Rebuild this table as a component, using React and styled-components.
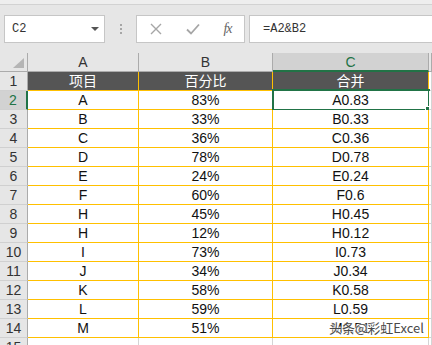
import React from "react"
import styled, { createGlobalStyle } from "styled-components"

const GlobalStyle = createGlobalStyle`
  html, body {
    margin: 0;
    padding: 0;
    background: #e6e6e6;
  }
  * {
    box-sizing: border-box;
  }
`

const Window = styled.div`
  position: relative;
  width: 432px;
  height: 345px;
  overflow: hidden;
  background: #e6e6e6;
  font-family: "Liberation Sans", "Noto Sans CJK SC", sans-serif;
`

const TopStrip = styled.div`
  height: 5px;
  background: #eeeeee;
  border-bottom: 1px solid #d2d2d2;
`

const FormulaBar = styled.div`
  display: flex;
  align-items: center;
  height: 48px;
  padding: 9px 0 10px 4px;
`

const NameBox = styled.div`
  display: flex;
  align-items: center;
  justify-content: space-between;
  width: 101px;
  height: 28px;
  padding: 0 5px 0 7px;
  background: #fff;
  border: 1px solid #c6c6c6;
  font-family: "Liberation Mono", monospace;
  font-size: 12px;
  color: #333;
`

const Caret = styled.span`
  width: 0;
  height: 0;
  border-left: 4px solid transparent;
  border-right: 4px solid transparent;
  border-top: 4px solid #555;
`

const Grip = styled.div`
  display: flex;
  flex-direction: column;
  align-items: center;
  gap: 2px;
  width: 31px;

  span {
    width: 2px;
    height: 2px;
    background: #a6a6a6;
  }
`

const ButtonBox = styled.div`
  display: flex;
  align-items: center;
  width: 109px;
  height: 28px;
  background: #fff;
  border: 1px solid #c6c6c6;
`

const IconButton = styled.div`
  display: flex;
  align-items: center;
  justify-content: center;
  width: ${(p) => p.$w}px;
  height: 100%;
  color: #a6a6a6;
`

const Fx = styled.span`
  font-family: "Liberation Serif", serif;
  font-style: italic;
  font-size: 14px;
  color: #666;
  letter-spacing: -1px;
`

const FormulaInput = styled.div`
  flex: 1;
  display: flex;
  align-items: center;
  height: 28px;
  margin-left: 4px;
  padding-left: 13px;
  background: #fff;
  border: 1px solid #c6c6c6;
  border-right: none;
  font-family: "Liberation Mono", monospace;
  font-size: 12px;
  color: #333;
`

const Sheet = styled.div`
  display: grid;
  grid-template-columns: 28px 111px 134px 156px 1fr;
  grid-auto-rows: 19px;
`

const variants = {
  corner: `background: #e6e6e6; border-right: 1px solid #ababab; border-bottom: 1px solid #ababab;`,
  colHead: `background: #e6e6e6; color: #333; border-right: 1px solid #ababab; border-bottom: 1px solid #ababab;`,
  colHeadActive: `background: #d2d2d2; color: #217346; border-right: 1px solid #ababab; border-bottom: 2px solid #217346;`,
  rowHead: `background: #e6e6e6; color: #333; border-right: 1px solid #ababab; border-bottom: 1px solid #d0d0d0;`,
  rowHeadActive: `background: #d2d2d2; color: #217346; border-right: 2px solid #217346; border-bottom: 1px solid #d0d0d0;`,
  title: `background: #555555; color: #fff; border-right: 1px solid #ffc000; border-bottom: 1px solid #ffc000;`,
  data: `background: #fff; color: #111; border-right: 1px solid #ffc000; border-bottom: 1px solid #ffc000;`,
  blank: `background: #fff; border-right: 1px solid #d4d4d4; border-bottom: 1px solid #d4d4d4;`,
}

const Cell = styled.div`
  position: relative;
  display: flex;
  align-items: center;
  justify-content: center;
  font-size: 14px;
  line-height: 18px;
  white-space: nowrap;
  ${(p) => variants[p.$v]}
`

const CornerMark = styled.span`
  position: absolute;
  right: 3px;
  bottom: 3px;
  width: 0;
  height: 0;
  border-left: 11px solid transparent;
  border-bottom: 10px solid #b5b5b5;
`

const Selection = styled.div`
  position: absolute;
  left: -1px;
  top: -2px;
  right: -2px;
  bottom: -2px;
  border: 2px solid #217346;
  pointer-events: none;
`

const FillHandle = styled.span`
  position: absolute;
  right: -4px;
  bottom: -4px;
  width: 7px;
  height: 7px;
  background: #217346;
  border: 1px solid #fff;
`

const Watermark = styled.div`
  position: absolute;
  left: 329px;
  top: 320px;
  font-family: "Noto Sans CJK SC", sans-serif;
  font-size: 13px;
  line-height: 16px;
  color: #4a4a4a;
  text-shadow: 0 0 2px #fff, 0 0 2px #fff, 0 0 3px #fff;
`

const rows = [
  ["A", "83%", "A0.83"],
  ["B", "33%", "B0.33"],
  ["C", "36%", "C0.36"],
  ["D", "78%", "D0.78"],
  ["E", "24%", "E0.24"],
  ["F", "60%", "F0.6"],
  ["H", "45%", "H0.45"],
  ["H", "12%", "H0.12"],
  ["I", "73%", "I0.73"],
  ["J", "34%", "J0.34"],
  ["K", "58%", "K0.58"],
  ["L", "59%", "L0.59"],
  ["M", "51%", "M0.51"],
]

function CrossIcon() {
  return (
    <svg width="12" height="12" viewBox="0 0 12 12">
      <path d="M1 1L11 11M11 1L1 11" stroke="currentColor" strokeWidth="1.4" fill="none" />
    </svg>
  )
}

function CheckIcon() {
  return (
    <svg width="14" height="12" viewBox="0 0 14 12">
      <path d="M1 6.5L5 10.5L13 1.5" stroke="currentColor" strokeWidth="1.8" fill="none" />
    </svg>
  )
}

export default function App() {
  return (
    <Window>
      <GlobalStyle />
      <TopStrip />
      <FormulaBar>
        <NameBox>
          C2
          <Caret />
        </NameBox>
        <Grip>
          <span />
          <span />
          <span />
        </Grip>
        <ButtonBox>
          <IconButton $w={38}>
            <CrossIcon />
          </IconButton>
          <IconButton $w={36}>
            <CheckIcon />
          </IconButton>
          <IconButton $w={33}>
            <Fx>fx</Fx>
          </IconButton>
        </ButtonBox>
        <FormulaInput>=A2&amp;B2</FormulaInput>
      </FormulaBar>

      <Sheet>
        <Cell $v="corner">
          <CornerMark />
        </Cell>
        <Cell $v="colHead">A</Cell>
        <Cell $v="colHead">B</Cell>
        <Cell $v="colHeadActive">C</Cell>
        <Cell $v="colHead" />

        <Cell $v="rowHead">1</Cell>
        <Cell $v="title">项目</Cell>
        <Cell $v="title">百分比</Cell>
        <Cell $v="title">合并</Cell>
        <Cell $v="blank" />

        {rows.map(([a, b, c], i) => (
          <React.Fragment key={i}>
            <Cell $v={i === 0 ? "rowHeadActive" : "rowHead"}>{i + 2}</Cell>
            <Cell $v="data">{a}</Cell>
            <Cell $v="data">{b}</Cell>
            <Cell $v="data">
              {c}
              {i === 0 && (
                <Selection>
                  <FillHandle />
                </Selection>
              )}
            </Cell>
            <Cell $v="blank" />
          </React.Fragment>
        ))}

        <Cell $v="rowHead">15</Cell>
        <Cell $v="blank" />
        <Cell $v="blank" />
        <Cell $v="blank" />
        <Cell $v="blank" />
      </Sheet>

      <Watermark>头条@彩虹Excel</Watermark>
    </Window>
  )
}
